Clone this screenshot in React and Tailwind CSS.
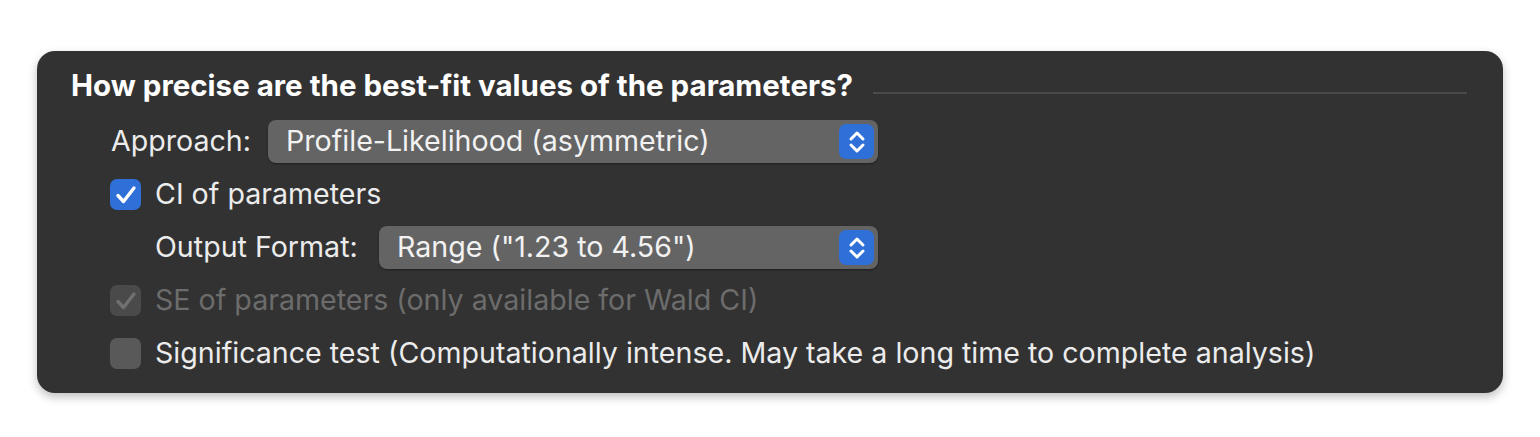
import React from 'react';

const Stepper = () => (
  <div className="flex h-[35px] w-[35px] items-center justify-center rounded-[7px] bg-[#2f6fd8]">
    <svg width="20" height="30" viewBox="0 0 20 30" fill="none" stroke="white" strokeWidth="3" strokeLinecap="round" strokeLinejoin="round">
      <path d="M4 12 L10 6 L16 12" />
      <path d="M4 18 L10 24 L16 18" />
    </svg>
  </div>
);

const Select = ({ value, className }) => (
  <div className={`flex h-[43px] items-center justify-between rounded-[8px] bg-[#646464] pl-[18px] pr-[4px] shadow-[0_1px_2px_rgba(0,0,0,0.4)] ${className}`}>
    <span className="text-[#f2f2f2]">{value}</span>
    <Stepper />
  </div>
);

const Checkbox = ({ checked, disabled }) => {
  if (disabled) {
    return (
      <div className="flex h-[31px] w-[31px] shrink-0 items-center justify-center rounded-[7px] bg-[#4a4a4a]">
        <svg width="22" height="20" viewBox="0 0 22 20" fill="none" stroke="#707070" strokeWidth="3.4" strokeLinecap="round" strokeLinejoin="round">
          <path d="M3 10.5 L8.5 16.5 L19 3" />
        </svg>
      </div>
    );
  }
  if (checked) {
    return (
      <div className="flex h-[31px] w-[31px] shrink-0 items-center justify-center rounded-[7px] bg-[#2f6fd8]">
        <svg width="22" height="20" viewBox="0 0 22 20" fill="none" stroke="white" strokeWidth="3.4" strokeLinecap="round" strokeLinejoin="round">
          <path d="M3 10.5 L8.5 16.5 L19 3" />
        </svg>
      </div>
    );
  }
  return <div className="h-[31px] w-[31px] shrink-0 rounded-[7px] bg-[#595959]" />;
};

export default function App() {
  return (
    <div className="h-[437px] w-[1540px] bg-white pt-[51px] pl-[37px]" style={{ fontFamily: 'Inter, "Liberation Sans", sans-serif' }}>
      <div className="flex h-[342px] w-[1466px] flex-col rounded-[18px] bg-[#323232] pl-[34px] pt-[16px] text-[28.6px] text-[#ececec] shadow-[0_4px_10px_rgba(0,0,0,0.25)]">
        <div className="flex h-[36px] items-center pr-[36px]">
          <span className="text-[29.5px] font-bold text-white">How precise are the best-fit values of the parameters?</span>
          <div className="ml-[20px] mt-[16px] h-[2px] flex-1 bg-[#4a4a4a]" />
        </div>
        <div className="mt-[17px] flex flex-col gap-[10px]">
          <div className="flex h-[43px] items-center pl-[40px]">
            <span className="w-[157px]">Approach:</span>
            <Select value="Profile-Likelihood (asymmetric)" className="w-[610px]" />
          </div>
          <div className="flex h-[43px] items-center gap-[14px] pl-[39px]">
            <Checkbox checked />
            <span>CI of parameters</span>
          </div>
          <div className="flex h-[43px] items-center pl-[84px]">
            <span className="w-[224px]">Output Format:</span>
            <Select value={'Range ("1.23 to 4.56")'} className="w-[499px]" />
          </div>
          <div className="flex h-[43px] items-center gap-[14px] pl-[39px]">
            <Checkbox disabled />
            <span className="text-[#6c6c6c]">SE of parameters (only available for Wald CI)</span>
          </div>
          <div className="flex h-[43px] items-center gap-[14px] pl-[39px]">
            <Checkbox />
            <span>Significance test (Computationally intense. May take a long time to complete analysis)</span>
          </div>
        </div>
      </div>
    </div>
  );
}
